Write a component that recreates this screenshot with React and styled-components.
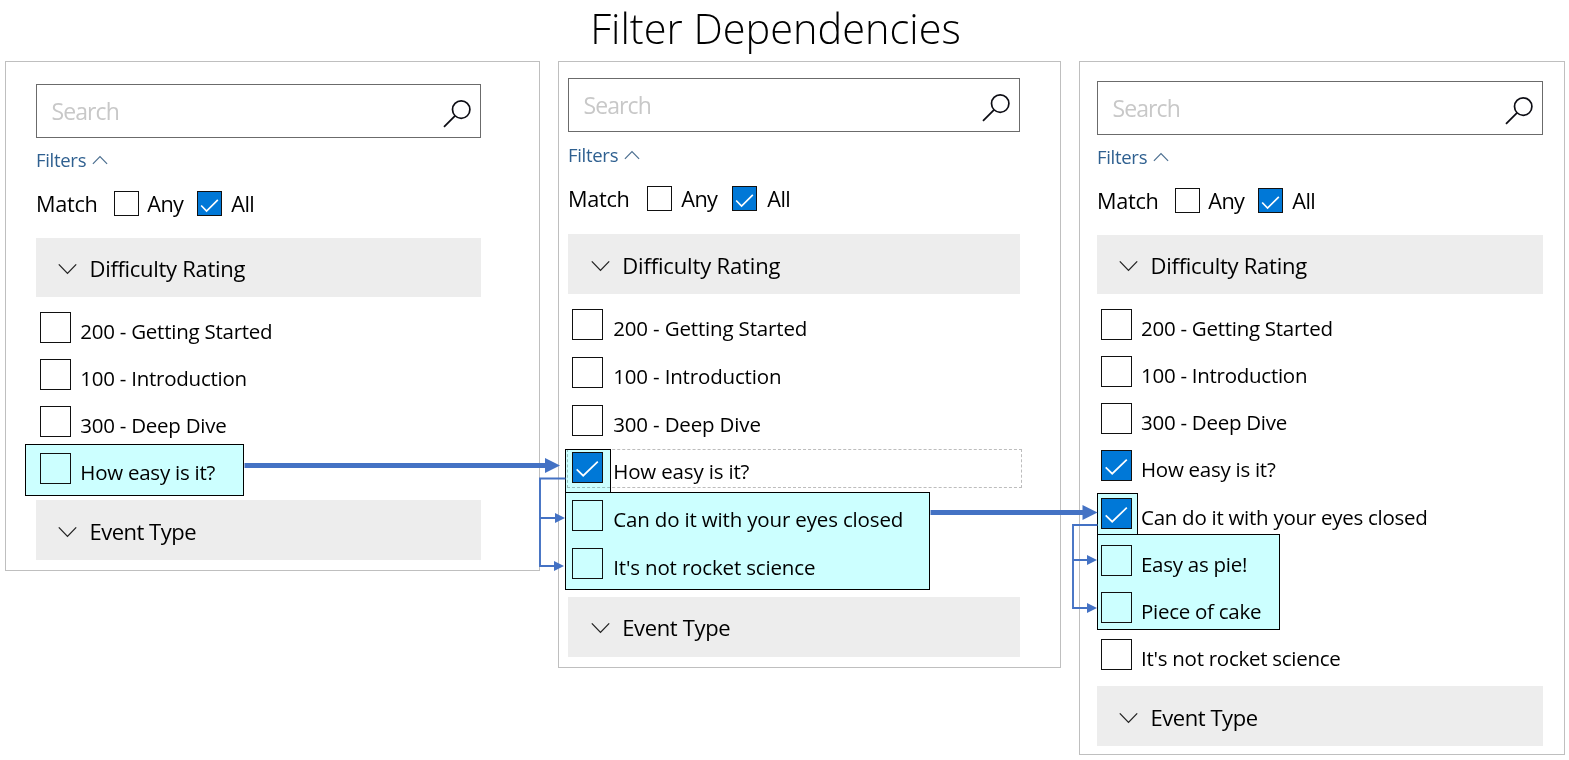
import React from "react";
import styled, { createGlobalStyle } from "styled-components";

const GlobalStyle = createGlobalStyle`
  * { box-sizing: border-box; }
  body {
    margin: 0;
    background: #fff;
    color: #000;
    font-family: "Open Sans", "Noto Sans", sans-serif;
    font-weight: 430;
    font-variant-ligatures: none;
  }
`;

const Page = styled.main`
  position: relative;
  width: 1569px;
  height: 760px;
  overflow: hidden;
`;

const Title = styled.h1`
  margin: 0;
  height: 61px;
  padding-right: 18px;
  line-height: 57px;
  font-size: 41.5px;
  font-weight: 320;
  letter-spacing: 0;
  text-align: center;
  color: #000;
`;

const Panels = styled.div`
  display: flex;
  align-items: flex-start;
  gap: 18px;
  padding-left: 5px;
`;

const Panel = styled.section`
  flex: none;
  width: ${(p) => p.$width}px;
  height: ${(p) => p.$height}px;
  padding: ${(p) => p.$padding};
  border: 1px solid #bfbfbf;
`;

const SearchBox = styled.div`
  display: flex;
  align-items: center;
  justify-content: space-between;
  height: 54px;
  padding: 0 8px 0 14px;
  border: 1px solid #6b6b6b;

  svg {
    margin-top: 4px;
  }
`;

const Placeholder = styled.span`
  line-height: 52px;
  font-size: 23px;
  letter-spacing: -0.9px;
  padding-left: 0.5px;
  color: #c8c8c8;
`;

const FiltersToggle = styled.div`
  display: flex;
  align-items: center;
  gap: 6px;
  height: 24px;
  margin: ${(p) => p.$top}px 0 19px 0;
  line-height: 24px;
  font-size: 18.5px;
  letter-spacing: -0.3px;
  color: #2f6090;
`;

const MatchRow = styled.div`
  display: grid;
  grid-template-columns: ${(p) => p.$columns};
  height: 25px;
  line-height: 25px;
  font-size: 21.7px;
`;

const MatchLabel = styled.span`
  letter-spacing: -0.3px;
`;

const MatchOption = styled.span`
  display: flex;
  gap: ${(p) => p.$gap}px;
  letter-spacing: -0.6px;
`;

const SectionHeader = styled.div`
  display: flex;
  align-items: center;
  gap: 12.5px;
  height: ${(p) => p.$height}px;
  margin-top: ${(p) => p.$top}px;
  padding: 1px 0 0 ${(p) => p.$indent}px;
  background: #ededed;
  font-size: 22px;
  letter-spacing: ${(p) => p.$spacing}px;

  svg {
    margin-top: 2px;
  }
`;

const Rows = styled.div`
  position: relative;
  margin-top: 15px;
`;

const Row = styled.div`
  position: relative;
  display: flex;
  gap: ${(p) => p.$gap}px;
  height: ${(p) => p.$pitch}px;
  padding-left: 4px;
  line-height: 38px;
  font-size: 20.5px;
  letter-spacing: ${(p) => p.$spacing}px;
  white-space: nowrap;
`;

const Box = styled.span`
  flex: none;
  width: ${(p) => p.$size}px;
  height: ${(p) => p.$size}px;
  border: 1px solid #111;
  background: ${(p) => (p.$checked ? "#0078d7" : p.$clear ? "transparent" : "#fff")};

  svg {
    display: block;
    width: 100%;
    height: 100%;
  }
`;

/* Tinted callout laid behind the rows it marks. */
const Highlight = styled.div`
  position: absolute;
  left: ${(p) => p.$x}px;
  top: ${(p) => p.$y}px;
  width: ${(p) => p.$w}px;
  height: ${(p) => p.$h}px;
  border: 1px solid #000;
  background: #ccffff;
  mix-blend-mode: multiply;
`;

const FocusOutline = styled.div`
  position: absolute;
  left: -1px;
  top: 140px;
  width: 455px;
  height: 39px;
  border: 1px dashed #bdbdbd;
`;

const Connectors = styled.svg`
  position: absolute;
  left: 0;
  top: 0;
  pointer-events: none;
`;

function Checkbox({ size, checked, clear }) {
  return (
    <Box $size={size} $checked={checked} $clear={clear}>
      {checked && (
        <svg viewBox="0 0 29 29" fill="none" stroke="#fff" strokeWidth={size > 28 ? 1.7 : 2.1}>
          <path
            d={size > 28 ? "M3.7 16.3 L10.2 22.7 L24.8 8.7" : "M4 17 L10.8 24 L25 10"}
          />
        </svg>
      )}
    </Box>
  );
}

function SearchIcon() {
  return (
    <svg width="30" height="30" viewBox="0 0 30 30" fill="none" stroke="#0d0d14" strokeWidth="1.7">
      <circle cx="19.2" cy="11.6" r="8.7" />
      <path d="M13 17.8 L2 28.8" />
    </svg>
  );
}

function ChevronUp() {
  return (
    <svg width="16" height="10" viewBox="0 0 16 10" fill="none" stroke="#4c6f90" strokeWidth="1.2">
      <path d="M0.9 8.8 L8 1.7 L15.1 8.8" />
    </svg>
  );
}

function ChevronDown() {
  return (
    <svg width="19" height="12" viewBox="0 0 19 12" fill="none" stroke="#222" strokeWidth="1.3">
      <path d="M0.8 1.4 L9.5 10.4 L18.2 1.4" />
    </svg>
  );
}

const panels = [
  {
    width: 535,
    height: 510,
    padding: "22px 58px 0 30px",
    filtersTop: 10,
    matchColumns: "78px 83px auto",
    optionGap: 8.3,
    headerHeight: 59,
    headerTop: 22,
    headerIndent: 22,
    headerSpacing: -0.3,
    pitch: 47,
    labelGap: 9.3,
    spacing: -0.25,
    eventTop: 0,
    eventHeight: 60,
    highlights: [{ x: -11, y: 132, w: 219, h: 52 }],
    rows: [
      { label: "200 - Getting Started" },
      { label: "100 - Introduction" },
      { label: "300 - Deep Dive" },
      { label: "How easy is it?", clear: true },
    ],
  },
  {
    width: 503,
    height: 607,
    padding: "16px 40px 0 9px",
    filtersTop: 11,
    matchColumns: "79px 85px auto",
    optionGap: 9.3,
    headerHeight: 60,
    headerTop: 23,
    headerIndent: 22.7,
    headerSpacing: -0.15,
    pitch: 47.8,
    labelGap: 10.2,
    spacing: -0.16,
    eventTop: 1.2,
    eventHeight: 60,
    focus: true,
    highlights: [
      { x: -3, y: 140, w: 46, h: 44 },
      { x: -3, y: 183, w: 365, h: 98 },
    ],
    rows: [
      { label: "200 - Getting Started" },
      { label: "100 - Introduction" },
      { label: "300 - Deep Dive" },
      { label: "How easy is it?", checked: true },
      { label: "Can do it with your eyes closed", clear: true },
      { label: "It's not rocket science", clear: true },
    ],
  },
  {
    width: 486,
    height: 694,
    padding: "19px 21px 0 17px",
    filtersTop: 10,
    matchColumns: "78px 83px auto",
    optionGap: 8.3,
    headerHeight: 59,
    headerTop: 22,
    headerIndent: 22,
    headerSpacing: -0.25,
    pitch: 47.14,
    labelGap: 9,
    spacing: -0.27,
    eventTop: 0,
    eventHeight: 60,
    highlights: [
      { x: 0, y: 184, w: 41, h: 42 },
      { x: 0, y: 225, w: 183, h: 96 },
    ],
    rows: [
      { label: "200 - Getting Started" },
      { label: "100 - Introduction" },
      { label: "300 - Deep Dive" },
      { label: "How easy is it?", checked: true },
      { label: "Can do it with your eyes closed", checked: true },
      { label: "Easy as pie!", clear: true },
      { label: "Piece of cake", clear: true },
      { label: "It's not rocket science" },
    ],
  },
];

function FilterPanel({ data }) {
  return (
    <Panel $width={data.width} $height={data.height} $padding={data.padding}>
      <SearchBox>
        <Placeholder>Search</Placeholder>
        <SearchIcon />
      </SearchBox>
      <FiltersToggle $top={data.filtersTop}>
        Filters
        <ChevronUp />
      </FiltersToggle>
      <MatchRow $columns={data.matchColumns}>
        <MatchLabel>Match</MatchLabel>
        <MatchOption $gap={data.optionGap}>
          <Checkbox size={25} />
          Any
        </MatchOption>
        <MatchOption $gap={data.optionGap + 1}>
          <Checkbox size={25} checked />
          All
        </MatchOption>
      </MatchRow>
      <SectionHeader
        $height={data.headerHeight}
        $top={data.headerTop}
        $indent={data.headerIndent}
        $spacing={data.headerSpacing}
      >
        <ChevronDown />
        Difficulty Rating
      </SectionHeader>
      <Rows>
        {data.focus && <FocusOutline />}
        {data.highlights.map((h, i) => (
          <Highlight key={i} $x={h.x} $y={h.y} $w={h.w} $h={h.h} />
        ))}
        {data.rows.map((row) => (
          <Row key={row.label} $pitch={data.pitch} $gap={data.labelGap} $spacing={data.spacing}>
            <Checkbox size={31} checked={row.checked} clear={row.clear} />
            {row.label}
          </Row>
        ))}
      </Rows>
      <SectionHeader
        $height={data.eventHeight}
        $top={data.eventTop}
        $indent={data.headerIndent}
        $spacing={data.headerSpacing - 0.2}
      >
        <ChevronDown />
        Event Type
      </SectionHeader>
    </Panel>
  );
}

export default function App() {
  return (
    <Page>
      <GlobalStyle />
      <Title>Filter Dependencies</Title>
      <Panels>
        {panels.map((data, i) => (
          <FilterPanel key={i} data={data} />
        ))}
      </Panels>
      <Connectors width="1569" height="760" fill="none" stroke="#4472c4">
        <path d="M244.5 465.5 H546 M930.5 512.5 H1084" strokeWidth="5" />
        <path d="M565.5 478.5 H540 V566 H556 M540 518 H556" strokeWidth="1.9" />
        <path d="M1097.5 525 H1073 V608 H1088 M1073 560 H1088" strokeWidth="1.9" />
        <g fill="#4472c4" stroke="none">
          <path d="M545 458 L560 465.5 L545 473 Z" />
          <path d="M1082.5 505 L1097.5 512.5 L1082.5 520 Z" />
          <path d="M555 513 L565 518 L555 523 Z" />
          <path d="M554 561 L564 566 L554 571 Z" />
          <path d="M1087 555 L1097 560 L1087 565 Z" />
          <path d="M1087 603 L1097 608 L1087 613 Z" />
        </g>
      </Connectors>
    </Page>
  );
}
